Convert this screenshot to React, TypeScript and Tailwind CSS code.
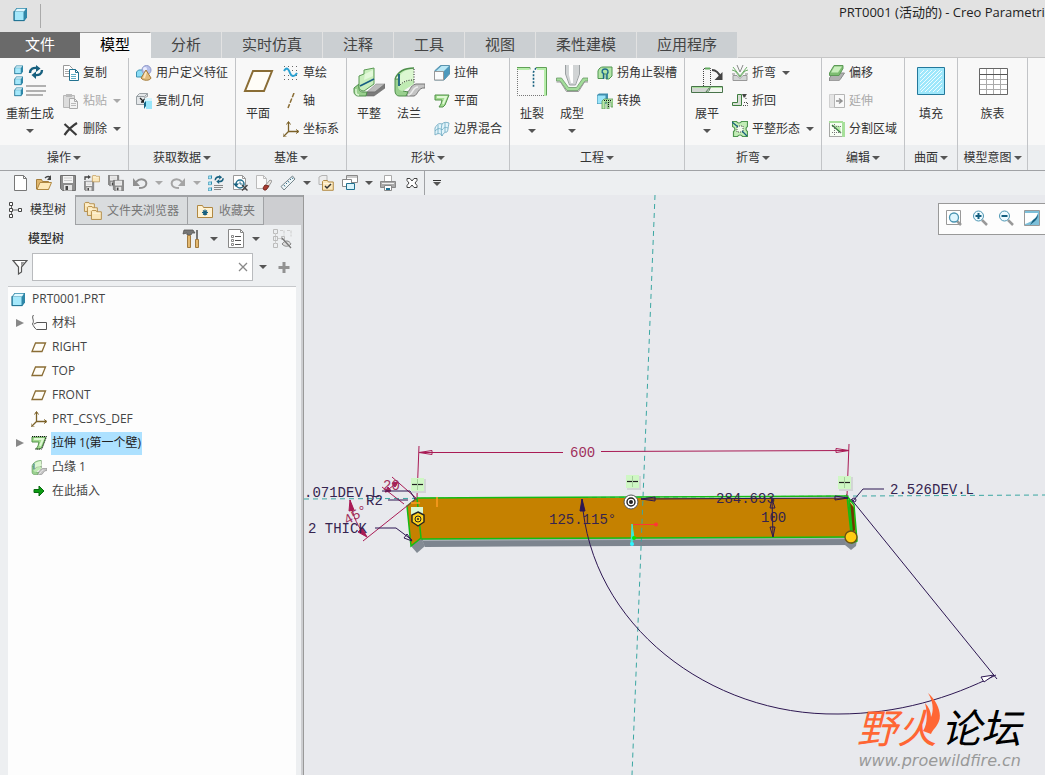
import { useState } from "react";
import type { ReactNode } from "react";

type IconProps = { size?: number; children: ReactNode };

function Svg({ size = 16, children }: IconProps) {
  return (
    <svg width={size} height={size} viewBox={`0 0 ${size} ${size}`} fill="none" aria-hidden="true" className="shrink-0">
      {children}
    </svg>
  );
}

const Caret = ({ dim = false }: { dim?: boolean }) => (
  <svg width="8" height="4" viewBox="0 0 8 4" aria-hidden="true" className="shrink-0">
    <path d="M0 0h8L4 4z" fill={dim ? "#a9a9a9" : "#555"} />
  </svg>
);

const Cube = ({ x = 0, y = 0, s = 8 }: { x?: number; y?: number; s?: number }) => (
  <g transform={`translate(${x} ${y}) scale(${s / 8})`}>
    <path d="M0.5 2.5L2 .5h6v5.5L6.5 8h-6z" fill="#2f87a8" />
    <path d="M1 2.5L2.3 1h5L6.3 2.5z" fill="#e2f9ff" />
    <path d="M1 2.8h5v4.7H1z" fill="#a5e8fb" />
    <path d="M.5 2.5v5.3h6" stroke="#1d6d8d" strokeWidth=".5" fill="none" />
  </g>
);

const Refresh = ({ x = 0, y = 0, k = 1 }: { x?: number; y?: number; k?: number }) => (
  <g transform={`translate(${x} ${y}) scale(${k})`}>
    <path d="M2 8C2 4 5 2.500 9 3" stroke="#17607f" strokeWidth="2.400" fill="none" />
    <path d="M8 0l4.500 3.500L8 7z" fill="#17607f" />
    <path d="M14 5c0 4-3 5.500-7 5" stroke="#17607f" strokeWidth="2.400" fill="none" />
    <path d="M8 6.500L3.500 10 8 14z" fill="#17607f" />
  </g>
);

const Doc = ({ x = 0, y = 0, w = 10, h = 13, line = "#888", fill = "#fff" }) => (
  <g transform={`translate(${x} ${y})`}>
    <path d={`M.5.500h${w - 4}l3 3v${h - 4}H.500z`} fill={fill} stroke={line} />
    <path d={`M${w - 3.5}.5v3h3`} stroke={line} fill="none" />
  </g>
);

const Floppy = ({ x = 0, y = 0, s = 16 }: { x?: number; y?: number; s?: number }) => (
  <g transform={`translate(${x} ${y}) scale(${s / 16})`}>
    <path d="M.5.5h15v15h-13l-2-2z" fill="#8d8d8d" stroke="#707070" />
    <path d="M3 1h10v7H3z" fill="#f4f4f4" />
    <path d="M4 3h8M4 5.500h8" stroke="#ccc" />
    <path d="M4 10h8v5.500H4z" fill="#e4e4e4" />
    <path d="M5.500 11h2.500v4H5.500z" fill="#444" />
  </g>
);

const Folder = ({ x = 0, y = 0, k = 1 }: { x?: number; y?: number; k?: number }) => (
  <g transform={`translate(${x} ${y}) scale(${k})`}>
    <path d="M.5 10.500V1.500L1.500.5h4l1 1.500h5v8.500z" fill="#fbe7ba" stroke="#b08842" />
    <path d="M1.500 3.500h9" stroke="#fff7e2" />
  </g>
);

const Plane = ({ size = 16 }) => (
  <Svg size={size}>
    {size > 16 ? (
      <path d="M11 6h19l-8 20H3z" fill="#fffdf7" stroke="#8a6d35" strokeWidth="2" />
    ) : (
      <path d="M4.500 4h10l-3.500 8.500H1z" fill="#fffdf7" stroke="#8a6d35" strokeWidth="1.300" />
    )}
  </Svg>
);

const Csys = () => (
  <Svg>
    <path d="M5.500 1v9.500H15M5.500 10.500L1 15" stroke="#7b6128" strokeWidth="1.300" />
    <path d="M3.500 3.500l2-3 2 3M13 8.500l3 2-3 2M0 12.500V16h3.500" stroke="#7b6128" />
  </Svg>
);

const FlatWall = () => (
  <Svg size={32}>
    <path d="M14 27l9-8h9l-10 8z" fill="#bcbcbc" stroke="#8a8a8a" strokeWidth=".6" />
    <path d="M14 27h8l10-8v4l-11 8h-8z" fill="#7b7b7b" stroke="#666" strokeWidth=".6" />
    <path d="M1 23l5-4v4c0 3 2 4 4 4h4l-1 4H5c-2 0-4-2-4-4z" fill="#9ad08f" stroke="#4e8e4b" />
    <path d="M6 20v-9l5-2V5l10-2v16l-10 7c-3 0-5-2-5-4z" fill="#c9efbd" stroke="#5a9a54" />
    <path d="M12 9l8-4v6l-9 4z" fill="#e3f9da" />
    <path d="M7 21l14-7" stroke="#185f83" strokeWidth="1.800" />
    <path d="M3 24v3c0 2 1 3 3 3" stroke="#dcf5d3" strokeWidth="1.500" />
  </Svg>
);

const Flange = ({ size = 32 }) => (
  <svg width={size} height={size} viewBox="0 0 32 32" fill="none" aria-hidden="true" className="shrink-0">
    <path d="M14 27c3 0 3-7 9-8h9v4c-7-1-7 7-11 8h-8z" fill="#c4c4c4" stroke="#777" />
    <path d="M15 30c5 0 4-8 10-8" stroke="#ededed" strokeWidth="1.500" />
    <path d="M2 14v12c0 3 2 5 4 5h7l2-4-5-1V14z" fill="#9ad08f" stroke="#4e8e4b" />
    <path d="M2 13c3-7 10-10 19-10v16l-11 7c-3 0-5-2-5-4V12z" fill="#c0ebb3" />
    <path d="M6 13c2-6 8-9 15-9v11c-6 0-11 2-15 6z" fill="#dcf7d1" />
    <path d="M2 14c3-8 10-11 19-11" stroke="#4e8e4b" strokeWidth="1.300" />
    <path d="M7 20c4-4 8-5 14-5M21 4v15" stroke="#222" strokeDasharray="1 1.500" />
    <path d="M6 9v12" stroke="#17607f" strokeWidth="1.800" />
  </svg>
);

const GreenSheet = ({ dotted = false }) => (
  <Svg>
    <path d="M1 2h14l-4 10-2 2H5l2-3 1-4H1z" fill="#a3dc8f" stroke="#53924b" />
    <path d="M3 4h9l-3 7" stroke="#dff8d4" strokeWidth="2" />
    {dotted && <path d="M1 1.500h14.500L11 14H4" stroke="#111" strokeDasharray="1 1" />}
  </Svg>
);

const icons: Record<string, ReactNode> = {
  regenerate: (
    <Svg size={32}>
      <Cube x={0} y={0} s={9} />
      <Cube x={0} y={11} s={9} />
      <Cube x={0} y={22} s={9} />
      <Refresh x={14} y={0} />
      <path d="M12 21h20M12 26h20M12 30h17" stroke="#999" strokeWidth="1.600" />
    </Svg>
  ),
  copy: (
    <Svg>
      <path d="M.5.500h6l3 3v8h-9z" fill="#fff" stroke="#999" />
      <path d="M2 4.500h3M2 6.500h4M2 8.500h4" stroke="#aaa" />
      <Doc x={6} y={4} w={10} h={12} line="#22718f" />
      <path d="M8 9.500h5M8 11.500h5M8 13.500h5" stroke="#5eaec7" />
    </Svg>
  ),
  paste: (
    <Svg>
      <path d="M.5 2.500h11v12H.500z" fill="#ddd" stroke="#b7b7b7" />
      <path d="M3 1h6v3H3z" fill="#bbb" />
      <Doc x={6} y={5} w={9} h={11} line="#aaa" fill="#f3f3f3" />
      <path d="M8 10.500h5M8 12.500h5" stroke="#bbb" />
    </Svg>
  ),
  remove: (
    <Svg>
      <path d="M1.500 3l12 11M14 2C9 5 5 9 1.500 14" stroke="#3b3b3b" strokeWidth="2.200" />
    </Svg>
  ),
  udf: (
    <Svg>
      <path d="M.5 7l2-2h7v7H.500z" fill="#8bdcf5" stroke="#3d93b2" />
      <circle cx="10.500" cy="5" r="4.500" fill="#b6bee8" stroke="#8f98c9" />
      <circle cx="9" cy="4" r="2" fill="#e9ecff" />
      <path d="M10 5l5 8c-1 3-8 3-10 0z" fill="#e2bd7d" stroke="#a37a37" />
      <path d="M10 7l-2 6" stroke="#fae5c0" strokeWidth="2" />
    </Svg>
  ),
  copyGeom: (
    <Svg>
      <path d="M.5 3.500l3-3h8v3l-3 1v7h-8z" fill="#e4e7e9" stroke="#9aa1a5" />
      <path d="M.5 3.500h8l3-3" stroke="#9aa1a5" />
      <path d="M4 5l4 4M8 6v3H5" stroke="#222" strokeWidth="1.400" />
      <path d="M8 9l2-3v7l-2 3z" fill="#116486" />
      <path d="M10 8h6v8h-6z" fill="#99e6fa" />
      <path d="M8 7.500l2-2.500h6v3h-6l-2 2z" fill="#d6f5fd" />
    </Svg>
  ),
  plane: <Plane size={32} />,
  sketch: (
    <Svg>
      <path d="M1 1.500h14M1 14.500h14M1 5.500h14M1 10.500h14" stroke="#666" strokeDasharray="1 3" />
      <path d="M1 6c3-5 5-1 6 2s4 5 7 0" stroke="#2ba0d0" strokeWidth="2" />
    </Svg>
  ),
  axis: (
    <Svg>
      <path d="M11 0L5 15" stroke="#8a6d35" strokeWidth="1.500" strokeDasharray="4.500 1.500" />
    </Svg>
  ),
  csys: <Csys />,
  flatWall: <FlatWall />,
  flange: <Flange />,
  extrude: (
    <Svg>
      <path d="M.5 6l6-5.500h9V9L10 15H.500z" fill="#4d99bd" stroke="#5b93ad" />
      <path d="M2 6l5.500-5H15l-5 5z" fill="#b9e7f5" />
      <path d="M.5 6.500h9V15h-9z" fill="#fbfcfd" stroke="#999" />
    </Svg>
  ),
  planar: <GreenSheet />,
  blend: (
    <Svg>
      <path d="M1 14V7c2-4 4-5 7-4 2-2 4-2 7-1-1 5-1 8-2 9-3 0-4 2-5 4-1-3-4-3-7-1z" fill="#e2f4fb" stroke="#7fb3c8" />
      <path d="M8 3c-1 4-1 8 0 12M1 10c3-3 5-3 7-1 2-3 4-3 6-2M4 4v9M11 2v9" stroke="#6aa9c2" strokeWidth=".8" />
    </Svg>
  ),
  rip: (
    <Svg size={32}>
      <path d="M1 2.500h13v2M20 2.500h10.500v28" stroke="#5fa156" />
      <path d="M1 4h12M21 4h8v27" stroke="#b7edaa" strokeWidth="2" />
      <path d="M1.500 4v26.500H28" stroke="#777" strokeDasharray="1 1" />
      <path d="M20 3l-2.500 4v16" stroke="#17607f" strokeWidth="1.600" strokeDasharray="2 1.500" />
    </Svg>
  ),
  form: (
    <Svg size={32}>
      <path d="M10 0h13v9l-4 11h-5L10 10z" fill="#d1d4d5" />
      <path d="M13 0h4v18h-2l-2-8z" fill="#fff" />
      <path d="M23.500 0v9l-4 11h-6L9.500 9V0" stroke="#9a9fa1" />
      <path d="M.5 13h5l7 9.500h8L27 13h5v3h-3l-7 9.500H11L4 16H.500z" fill="#a3dc9a" stroke="#6a9967" strokeWidth=".8" />
      <path d="M.5 17h4l6 9.500h12l6-9.500H32" stroke="#999" />
    </Svg>
  ),
  cornerRelief: (
    <Svg>
      <path d="M1 13.500V6c1-3 3-4 5-4h9v9l-3 3H9V9H7v4.500z" fill="#b3e5a7" stroke="#4f9650" />
      <path d="M6.500 14V8.500C4 7 5 4 8 4s4 3 2 5v5" stroke="#19688c" strokeWidth="1.400" />
    </Svg>
  ),
  convert: (
    <Svg>
      <path d="M0 2l2-1.500h9V9L9 11H0z" fill="#408ead" />
      <path d="M.5 2.500h8v8h-8z" fill="#9be5fa" />
      <path d="M5 16V8l2-2h9v8h-2V9h-2v7h-2V9H8v7z" fill="#b8eaab" stroke="#5a9a54" strokeWidth=".8" />
      <path d="M7 7.500h8M11.500 9v6" stroke="#111" strokeDasharray="1 1" />
    </Svg>
  ),
  unbend: (
    <Svg size={32}>
      <path d="M.5 21.500h19l-5 6H.500z" fill="#d2d6d2" stroke="#48734a" />
      <path d="M14.500 27.500c3 0 4-2 5-6h12v6z" fill="#f1f6ef" stroke="#48734a" />
      <path d="M1.500 22.500h17M20 22.500h11" stroke="#a6e09a" />
      <path d="M12.500 21V3.500h7v17" stroke="#444" strokeDasharray="1 1" />
      <path d="M14 3.500h5" stroke="#65ac62" strokeWidth="2" />
      <path d="M21 5c4 0 7 3 9 8" stroke="#444" strokeWidth="2" />
      <path d="M31.500 7v8h-8z" fill="#444" />
    </Svg>
  ),
  bend: (
    <Svg>
      <path d="M1 15.500v-5h4l3 3 3-3h4v5z" fill="#d3d6d6" stroke="#999" />
      <path d="M0 5l3 1 5 6 5-6 3-1M1 2l7 9 7-9" stroke="#6fae69" />
      <path d="M5 0l3 7 3-7M0 9h3M13 9h3" stroke="#888" />
    </Svg>
  ),
  bendBack: (
    <Svg>
      <path d="M.5 12.500v-3h5v-8h4v11z" fill="#d9ded7" stroke="#3e7e3f" />
      <path d="M11 12.500h4.500v-3H11M14 6c0-2-1-3-3-4" stroke="#444" strokeDasharray="1 1" />
      <path d="M10 1h5l-3 4z" fill="#444" />
    </Svg>
  ),
  flatPattern: (
    <Svg>
      <path d="M.5.500h4c1 2 4 2 5 0h6v5c-2 1-2 4 0 5v5h-5c-1-2-4-2-5 0h-4v-5c2-1 2-4-1-5z" fill="#c2edb6" stroke="#4f9650" strokeWidth="1.200" />
      <path d="M5 5h6v6H5z" fill="#f1fbed" stroke="#555" strokeDasharray="1 1" />
      <path d="M0 1l6 5M10 10l5 5" stroke="#17607f" strokeWidth="1.300" />
    </Svg>
  ),
  offset: (
    <Svg>
      <path d="M4 8h11.500l-4 6-2 2H.500v-3z" fill="#b1b1b1" stroke="#8b8b8b" />
      <path d="M5 .5h9v3l-4 7H.500V8z" fill="#7ebd72" stroke="#5d9a57" />
      <path d="M5.500 1.500h7.500l-4 6H2z" fill="#c9efbd" />
    </Svg>
  ),
  extend: (
    <Svg>
      <path d="M.5 1.500h5v13h-5z" fill="#e5e5e5" stroke="#d0d0d0" />
      <path d="M5.500 1.500h10v13h-10z" fill="#f9f9f9" stroke="#b5b5b5" />
      <path d="M7 8h6M10 5.500L13 8l-3 2.500" stroke="#929292" strokeWidth="1.500" />
    </Svg>
  ),
  split: (
    <Svg>
      <path d="M.5.500h13v15h-13z" fill="#f8fff5" stroke="#555" strokeDasharray="1 1" />
      <path d="M13 1h3v15h-3z" fill="#a7e09b" />
      <path d="M0 1h14" stroke="#a7e09b" strokeWidth="2" />
      <path d="M4 4l7 1 1 7z" fill="#b8eaab" />
      <path d="M3 4l9 8" stroke="#367b3d" strokeWidth="1.400" />
      <path d="M5.500 3v11M3 5.500h10M3 11.500h10" stroke="#777" strokeDasharray="1 1" />
    </Svg>
  ),
  fill: (
    <Svg size={32}>
      <path d="M2.500 2.500h27v27h-27z" fill="#9ee7fb" stroke="#23789b" />
      <path
        d="M5 9l4-4M5 13l8-8M5 17L17 5M5 21L21 5M5 25L25 5M6 27L27 6M10 27l17-17M14 27l13-13M18 27l9-9M22 27l5-5"
        stroke="#effcff"
      />
    </Svg>
  ),
  familyTable: (
    <Svg size={32}>
      <path d="M2.500 3.500h28v26h-28z" fill="#fff" stroke="#666" />
      <path d="M3 14.500h27M3 19.500h27M3 24.500h27M9.500 4v25M16.500 4v25M23.500 4v25" stroke="#aaa" />
      <path d="M3 9.500h27" stroke="#555" />
    </Svg>
  ),
  newFile: (
    <Svg>
      <Doc x={2} y={0} w={13} h={16} line="#777" />
    </Svg>
  ),
  open: (
    <Svg>
      <path d="M.5 14V4.500h5l1 2h6v8z" fill="#dfb66d" stroke="#a47d3a" />
      <path d="M1 14.500l3-7h11.500l-3 7z" fill="#ffe9b8" stroke="#b08842" />
      <path d="M9 3c2-2 3-2 5-1" stroke="#444" strokeWidth="1.400" />
      <path d="M15 0v5h-4z" fill="#444" />
    </Svg>
  ),
  save: (
    <Svg>
      <Floppy />
    </Svg>
  ),
  saveAs: (
    <Svg>
      <Floppy y={6} s={10} />
      <Folder x={8} y={0} k={0.65} />
      <path d="M1 5V2h4" stroke="#444" strokeWidth="1.300" />
      <path d="M4 0l3 2-3 2z" fill="#444" />
    </Svg>
  ),
  saveCopy: (
    <Svg>
      <Floppy s={11} />
      <Floppy x={5} y={5} s={11} />
    </Svg>
  ),
  undo: (
    <Svg>
      <path d="M4 7c5-5 12-2 10 3-1 3-4 3-7 3" stroke="#909090" strokeWidth="2" />
      <path d="M1 3v8h7z" fill="#909090" />
    </Svg>
  ),
  redo: (
    <Svg>
      <path d="M12 7C7 2 0 5 2 10c1 3 4 3 7 3" stroke="#a5a5a5" strokeWidth="2" />
      <path d="M15 3v8H8z" fill="#a5a5a5" />
    </Svg>
  ),
  regenSmall: (
    <Svg>
      <Cube y={0} s={4} />
      <Cube y={6} s={4} />
      <Cube y={12} s={4} />
      <Refresh x={6} y={0} k={0.65} />
      <path d="M6 10.500h9M6 12.500h9M6 14.500h7" stroke="#888" />
    </Svg>
  ),
  regenManager: (
    <Svg>
      <Doc x={1} w={13} h={15} line="#999" />
      <circle cx="8" cy="9" r="4" fill="#fff" stroke="#24718f" strokeWidth="1.500" />
      <path d="M8 6.500V9h2.500" stroke="#24718f" />
      <path d="M1 8.500l3 3.500 3-3.500z" fill="#17607f" />
      <path d="M10 10l5.500 5.500M15.500 10L10 15.500" stroke="#444" strokeWidth="1.400" />
    </Svg>
  ),
  erase: (
    <Svg>
      <Doc w={11} h={14} line="#bbb" fill="#fafafa" />
      <path d="M8 12l6-7 2 1-5 8z" fill="#eee8e2" stroke="#999" />
      <path d="M7 13l2-3 4 1-3 4H8z" fill="#aa3d32" stroke="#792b23" />
    </Svg>
  ),
  measure: (
    <Svg>
      <path d="M1 11.500L12.500 1 15 4 4 15z" fill="#eff6f8" stroke="#76858b" />
      <path d="M4 10l1 1.500M6 8l1 1M8 6l1 1.500M10 4l1 1M12 2.500l1 1.500" stroke="#37718a" />
    </Svg>
  ),
  folders: (
    <Svg>
      <path d="M1 2l3-1.500h5v9H1z" fill="#ededed" stroke="#b3b3b3" />
      <Folder x={4} y={5} k={0.98} />
      <path d="M7 11l2 2 4-4" stroke="#333" strokeWidth="1.500" />
    </Svg>
  ),
  windows: (
    <Svg>
      <path d="M4.500.5h11v7h-11z" fill="#fff" stroke="#888" />
      <path d="M.5 4.500h9v7h-9z" fill="#fff" stroke="#888" />
      <path d="M4.500 8.500h8v6h-8z" fill="#d9f3fb" stroke="#20708f" />
      <path d="M5 2h10" stroke="#999" />
    </Svg>
  ),
  print: (
    <Svg>
      <path d="M4.500.5h7v6h-7z" fill="#fff" stroke="#aaa" />
      <path d="M.5 6.500h15v6H.500z" fill="#a9a9a9" stroke="#888" />
      <path d="M2 8.500h12" stroke="#eee" />
      <path d="M4.500 10.500h7v5h-7z" fill="#fff" stroke="#888" />
      <path d="M6 13h4v2H6z" fill="#1d7194" />
    </Svg>
  ),
  closeWindow: (
    <Svg>
      <path d="M3 3.500h3l2 2.500 2-2.500h3v2L11 8l2 2.500v2h-3L8 10l-2 2.500H3v-2L5 8 3 5.500z" fill="#fff" stroke="#444" />
    </Svg>
  ),
  part: (
    <Svg>
      <Cube x={1} y={1} s={14} />
    </Svg>
  ),
  material: (
    <Svg>
      <path d="M2.500 0C0 3 4 5 1.500 9c1 2 2 4 4 5.500h10v-7H6L3 9" stroke="#555" />
    </Svg>
  ),
  datum: <Plane />,
  wall: <GreenSheet dotted />,
  insert: (
    <Svg>
      <path d="M3 6.500h5V3l5 5-5 5V9.500H3z" fill="#0c9c13" stroke="#086b10" />
    </Svg>
  ),
  tree: (
    <Svg>
      <path d="M3.500 3v10M3.500 8h7" stroke="#666" />
      <path d="M1.500.5h3v3h-3zM1.500 6.500h3v3h-3zM10.500 6.500h3v3h-3zM1.500 12.500h3v3h-3z" fill="#fff" stroke="#444" />
    </Svg>
  ),
  browser: (
    <Svg size={20}>
      <Folder x={1} y={1} k={0.9} />
      <Folder x={4} y={5} k={0.9} />
      <Folder x={8} y={9} k={0.9} />
    </Svg>
  ),
  favorite: (
    <Svg>
      <path d="M.5 14.500v-12h5l1 2h9v10z" fill="#fff2d2" stroke="#b08842" />
      <path d="M8 6.500v6M5 9.500h6M6 7.500l4 4M10 7.500l-4 4" stroke="#17607f" strokeWidth="1.200" />
    </Svg>
  ),
  tools: (
    <Svg size={20}>
      <path d="M2 1h9l2 3h-3l-1 2H5V4L1 5z" fill="#777" stroke="#555" strokeWidth=".8" />
      <path d="M5.500 6.500h3v12h-3z" fill="#e3b971" stroke="#a07a40" />
      <path d="M15 1v9" stroke="#777" strokeWidth="2" />
      <path d="M13.500 10.500h3v8h-3z" fill="#e3b971" stroke="#a07a40" />
    </Svg>
  ),
  list: (
    <Svg size={20}>
      <Doc x={2} y={0} w={16} h={19} />
      <path d="M9 7.500h6M9 11.500h6M9 15.500h6" stroke="#555" />
      <path d="M5.500 6.500h2v2h-2zM5.500 10.500h2v2h-2zM5.500 14.500h2v2h-2z" stroke="#888" />
    </Svg>
  ),
  treeHidden: (
    <Svg size={20}>
      <path d="M1.500.5h4v4h-4zM1.500 7.500h4v4h-4zM1.500 14.500h4v4h-4zM9.500 7.500h3v3h-3z" stroke="#bbb" />
      <path d="M3.500 4v11M6 9.500h3M8 1.500h4v5M15 1.500h4v6" stroke="#ccc" strokeDasharray="3 1" />
      <path d="M10 15c3-4 7-4 9 0-3 3-6 3-9 0z" fill="#ddd" stroke="#888" />
      <path d="M10 9l9 10" stroke="#777" strokeWidth="1.300" />
    </Svg>
  ),
  funnel: (
    <Svg>
      <path d="M1 1.500h14L9.500 8v5l-3 2V8z" fill="#fff" stroke="#555" strokeWidth="1.200" />
      <path d="M9 3h4L9 7.500z" fill="#999" />
    </Svg>
  ),
  plus: (
    <Svg>
      <path d="M8 3v11M2.500 8.500h11" stroke="#929292" strokeWidth="3" />
    </Svg>
  ),
  zoomFit: (
    <Svg>
      <path d="M.5.500h14v14H.500z" fill="#fff" stroke="#999" />
      <path d="M11 11l4 4" stroke="#999" strokeWidth="2.500" />
      <circle cx="8" cy="7.500" r="4.500" fill="#dff6ff" stroke="#4b95b2" strokeWidth="1.300" />
    </Svg>
  ),
  zoomIn: (
    <Svg>
      <path d="M10 10l5 5" stroke="#999" strokeWidth="2.500" />
      <circle cx="6.500" cy="6" r="5" fill="#eefaff" stroke="#4b95b2" />
      <path d="M6.500 3v6M3.500 6h6" stroke="#145f80" strokeWidth="2" />
    </Svg>
  ),
  zoomOut: (
    <Svg>
      <path d="M10 10l5 5" stroke="#999" strokeWidth="2.500" />
      <circle cx="6.500" cy="6" r="5" fill="#eefaff" stroke="#4b95b2" />
      <path d="M3.500 6h6" stroke="#145f80" strokeWidth="2" />
    </Svg>
  ),
  repaint: (
    <Svg>
      <path d="M.5.500h15v15H.500z" fill="#7dbfd9" stroke="#999" />
      <path d="M1 3h13C12 9 7 12 1 14z" fill="#fff" />
      <path d="M14 4c-1 3-3 5-5 6l-3 5 5-4c2-2 3-4 3-7z" fill="#17607f" />
    </Svg>
  ),
};

type Item = { icon: string; label: string; menu?: boolean; disabled?: boolean };
type Group = { title: string; width: string; big?: Item[]; small?: Item[] };

const groups: Group[] = [
  {
    title: "操作",
    width: "w-[129px]",
    big: [{ icon: "regenerate", label: "重新生成", menu: true }],
    small: [
      { icon: "copy", label: "复制" },
      { icon: "paste", label: "粘贴", menu: true, disabled: true },
      { icon: "remove", label: "删除", menu: true },
    ],
  },
  {
    title: "获取数据",
    width: "w-[107px]",
    small: [
      { icon: "udf", label: "用户定义特征" },
      { icon: "copyGeom", label: "复制几何" },
    ],
  },
  {
    title: "基准",
    width: "w-[111px]",
    big: [{ icon: "plane", label: "平面" }],
    small: [
      { icon: "sketch", label: "草绘" },
      { icon: "axis", label: "轴" },
      { icon: "csys", label: "坐标系" },
    ],
  },
  {
    title: "形状",
    width: "w-[163px]",
    big: [
      { icon: "flatWall", label: "平整" },
      { icon: "flange", label: "法兰" },
    ],
    small: [
      { icon: "extrude", label: "拉伸" },
      { icon: "planar", label: "平面" },
      { icon: "blend", label: "边界混合" },
    ],
  },
  {
    title: "工程",
    width: "w-[175px]",
    big: [
      { icon: "rip", label: "扯裂", menu: true },
      { icon: "form", label: "成型", menu: true },
    ],
    small: [
      { icon: "cornerRelief", label: "拐角止裂槽" },
      { icon: "convert", label: "转换" },
    ],
  },
  {
    title: "折弯",
    width: "w-[137px]",
    big: [{ icon: "unbend", label: "展平", menu: true }],
    small: [
      { icon: "bend", label: "折弯", menu: true },
      { icon: "bendBack", label: "折回" },
      { icon: "flatPattern", label: "平整形态", menu: true },
    ],
  },
  {
    title: "编辑",
    width: "w-[83px]",
    small: [
      { icon: "offset", label: "偏移" },
      { icon: "extend", label: "延伸", disabled: true },
      { icon: "split", label: "分割区域" },
    ],
  },
  { title: "曲面", width: "w-[53px]", big: [{ icon: "fill", label: "填充" }] },
  { title: "模型意图", width: "w-[70px]", big: [{ icon: "familyTable", label: "族表" }] },
];

const tabs = ["模型", "分析", "实时仿真", "注释", "工具", "视图", "柔性建模", "应用程序"];

const quickItems = [
  { icon: "newFile", label: "新建" },
  { icon: "open", label: "打开" },
  { icon: "save", label: "保存" },
  { icon: "saveAs", label: "另存为" },
  { icon: "saveCopy", label: "保存副本" },
  { icon: "undo", label: "撤消", menu: true, disabled: true },
  { icon: "redo", label: "重做", menu: true, disabled: true },
  { icon: "regenSmall", label: "重新生成" },
  { icon: "regenManager", label: "重新生成管理器" },
  { icon: "erase", label: "拭除" },
  { icon: "measure", label: "测量", menu: true },
  { icon: "folders", label: "工作目录" },
  { icon: "windows", label: "窗口", menu: true },
  { icon: "print", label: "打印" },
  { icon: "closeWindow", label: "关闭" },
];

const treeItems = [
  { icon: "material", label: "材料", branch: true },
  { icon: "datum", label: "RIGHT" },
  { icon: "datum", label: "TOP" },
  { icon: "datum", label: "FRONT" },
  { icon: "csys", label: "PRT_CSYS_DEF" },
  { icon: "wall", label: "拉伸 1(第一个壁)", branch: true },
  { icon: "lip", label: "凸缘 1" },
  { icon: "insert", label: "在此插入" },
];

function BigButton({ item }: { item: Item }) {
  return (
    <button className={`flex flex-col items-center pt-1.5 ${item.label.length > 2 ? "w-14" : "w-10"}`}>
      {icons[item.icon]}
      <span className="mt-2 text-xs leading-[18px] whitespace-nowrap">{item.label}</span>
      {item.menu && (
        <span className="mt-1.5">
          <Caret />
        </span>
      )}
    </button>
  );
}

function SmallButton({ item }: { item: Item }) {
  return (
    <button
      disabled={item.disabled}
      className={`flex h-7 items-center gap-1 text-xs whitespace-nowrap ${item.disabled ? "text-[#aaa]" : ""}`}
    >
      {icons[item.icon]}
      <span>{item.label}</span>
      {item.menu && (
        <span className="ml-0.5">
          <Caret dim={item.disabled} />
        </span>
      )}
    </button>
  );
}

function RibbonGroup({ group }: { group: Group }) {
  const centered = !group.small;
  return (
    <section className={`flex shrink-0 flex-col border-r border-[#c2c4c7] ${group.width}`}>
      <div className={`flex h-[87px] bg-[#f8f8f8] pt-px ${centered ? "justify-center" : "pl-0.5"}`}>
        {group.big?.map((item) => <BigButton key={item.label} item={item} />)}
        {group.small && (
          <div className="ml-[5px] flex flex-col items-start">
            {group.small.map((item) => (
              <SmallButton key={item.label} item={item} />
            ))}
          </div>
        )}
      </div>
      <button className="flex h-[25px] items-center justify-center gap-0.5 bg-[#edeff1] text-xs whitespace-nowrap">
        {group.title}
        <Caret />
      </button>
    </section>
  );
}

function Ribbon() {
  const [active, setActive] = useState("模型");
  return (
    <>
      <nav className="flex h-[26px] text-[15px] whitespace-nowrap text-[#444]">
        <button className="w-20 bg-[#6a6a6a] pb-0.5 text-white">文件</button>
        {tabs.map((tab) => (
          <button
            key={tab}
            onClick={() => setActive(tab)}
            className={`border-r px-5 pb-0.5 ${
              tab === active
                ? "border-[#f8f8f8] border-t border-t-[#999] bg-[#f8f8f8] text-black"
                : "border-[#e2e2e2] bg-[#cbcfd2]"
            }`}
          >
            {tab}
          </button>
        ))}
        <div className="flex-1 border-b border-[#c6c6c6]" />
      </nav>
      <div className="flex overflow-hidden border-b border-[#a0a2a5] bg-[#f8f8f8]">
        {groups.map((group) => (
          <RibbonGroup key={group.title} group={group} />
        ))}
        <div className="flex flex-1 flex-col">
          <div className="flex-1" />
          <div className="h-[25px] bg-[#edeff1]" />
        </div>
      </div>
    </>
  );
}

function QuickBar() {
  return (
    <div className="flex h-6 items-center bg-[#edeff1] pl-2">
      {quickItems.map((item) => (
        <div key={item.icon} className="flex items-center">
          <button aria-label={item.label} className="flex w-6 justify-center">
            {icons[item.icon]}
          </button>
          {item.menu && (
            <button aria-label={`${item.label}选项`} className="flex w-3.5 justify-center">
              <Caret dim={item.disabled} />
            </button>
          )}
        </div>
      ))}
      <button aria-label="自定义" className="flex h-6 w-6 flex-col items-center justify-center gap-px border-l border-[#a0a2a5]">
        <span className="h-px w-2 bg-[#333]" />
        <Caret />
      </button>
    </div>
  );
}

function ModelTree() {
  const [filter, setFilter] = useState("");
  const [selected, setSelected] = useState("拉伸 1(第一个壁)");
  return (
    <aside className="flex w-[304px] shrink-0 flex-col border-r border-[#999] bg-[#edeff1]">
      <div className="flex h-[30px] bg-[#cdced1] text-xs whitespace-nowrap text-[#777]">
        <button className="flex w-[75px] items-center gap-1.5 bg-[#edeff1] pl-2 text-[#333]">
          {icons.tree}
          模型树
        </button>
        <button className="flex w-[113px] items-center gap-1 border border-t-2 border-[#a0a2a5] bg-[#d9dcde] pl-[7px]">
          {icons.browser}
          文件夹浏览器
        </button>
        <button className="flex w-[76px] items-center gap-1.5 border border-t-2 border-l-0 border-[#a0a2a5] bg-[#d9dcde] pl-[9px]">
          {icons.favorite}
          收藏夹
        </button>
        <div className="flex-1 border-t-2 border-[#a0a2a5]" />
      </div>
      <div className="flex flex-1 border-r-2 border-[#cdced1]">
        <div className="flex flex-1 flex-col pr-[5px] pl-2">
          <div className="flex h-7 items-center pl-5">
            <h2 className="flex-1 text-xs font-medium text-[#333]">模型树</h2>
            <div className="flex items-center pr-1">
              <button aria-label="设置" className="flex items-center gap-2">
                {icons.tools}
                <Caret />
              </button>
              <button aria-label="显示" className="ml-2 flex items-center gap-1.5">
                {icons.list}
                <Caret />
              </button>
              <button aria-label="隐藏" className="ml-3">
                {icons.treeHidden}
              </button>
            </div>
          </div>
          <div className="flex h-[33px] items-start pr-1 pl-1">
            <label htmlFor="tree-filter" className="mt-1.5 w-5">
              {icons.funnel}
            </label>
            <div className="flex h-7 flex-1 items-center border border-[#b9bbbe] bg-white pr-1">
              <input
                id="tree-filter"
                aria-label="过滤"
                value={filter}
                onChange={(e) => setFilter(e.target.value)}
                className="h-6 w-0 flex-1 px-1 text-xs outline-none"
              />
              <button aria-label="清除" onClick={() => setFilter("")}>
                <svg width="10" height="10" viewBox="0 0 10 10" aria-hidden="true">
                  <path d="M1 1l8 8M9 1L1 9" stroke="#888" strokeWidth="1.300" />
                </svg>
              </button>
            </div>
            <div className="flex h-7 w-[39px] items-center justify-between pl-1.5">
              <button aria-label="过滤选项">
                <Caret />
              </button>
              <button aria-label="添加">{icons.plus}</button>
            </div>
          </div>
          <ul className="flex-1 border-t border-[#c6c8cb] bg-[#fdfdfd] text-xs text-[#444]">
            <li className="flex h-6 items-center gap-1.5 pl-0.5">
              {icons.part}
              PRT0001.PRT
            </li>
            {treeItems.map((item) => (
              <li key={item.label} className="flex h-6 items-center pl-2">
                <span className="w-[15px]">
                  {item.branch && (
                    <svg width="8" height="8" viewBox="0 0 8 8" aria-hidden="true">
                      <path d="M0 0l8 4-8 4z" fill="#888" />
                    </svg>
                  )}
                </span>
                {item.icon === "lip" ? <Flange size={16} /> : icons[item.icon]}
                <button
                  onClick={() => setSelected(item.label)}
                  className={`ml-1 h-[23px] px-px text-left whitespace-nowrap ${selected === item.label ? "bg-[#ade1ff] text-[#222]" : ""}`}
                >
                  {item.label}
                </button>
              </li>
            ))}
          </ul>
        </div>
      </div>
    </aside>
  );
}

const GreenTag = ({ x, y }: { x: number; y: number }) => (
  <g>
    <rect x={x + 1} y={y + 1} width="14" height="14" fill="#d3d5d6" />
    <rect x={x} y={y} width="13" height="13" fill="#cff7c4" />
    <path d={`M${x + 1} ${y + 6.5}h11`} stroke="#222" strokeWidth="1.200" />
    <path d={`M${x + 6.5} ${y + 1}v11`} stroke="#a5cc9c" />
  </g>
);

function Viewport() {
  return (
    <main className="relative flex-1 overflow-hidden bg-[#e8e9ed]">
      {/* model, datum planes and sheet metal dimensions */}
      <svg
        width="741"
        height="580"
        viewBox="304 195 741 580"
        fill="none"
        role="img"
        aria-label="PRT0001"
        className="block max-w-none font-['Liberation_Mono',monospace] text-sm"
      >
        <path d="M304 499l741-4" stroke="#3aa7a2" strokeDasharray="5 4" />

        <path d="M421 538l430-2 2 9-428 2z" fill="#7d858f" />
        <path d="M423 540l428-2" stroke="#aab0b8" strokeWidth="2" />
        <path d="M411 546l10-8 4 8-8 7z" fill="#838b94" />
        <path d="M845 538l12 2-1 6-5 4-6-5z" fill="#838b94" />
        <path d="M407 506l10-8h430l7 9 3 34-6 2-2-6-428 2-10 7z" fill="#c58100" />
        <path d="M849 502l5 6 1 22-3 3z" fill="#6b3900" />
        <path d="M655 195L632 775" stroke="#3aa7a2" strokeDasharray="5 4" />
        <path d="M417 498l430-2M421 539l428-2" stroke="#14bc14" strokeWidth="1.500" />
        <path d="M417 498l-10 8 4 40 10-8zM847 496l7 9 3 36-5 2zM849 498l4 42" stroke="#14bc14" strokeWidth="1.500" />

        {/* red dimensions */}
        <g stroke="#a91b55">
          <path d="M419 446l-2 51M849 444l-2 52M419 452.500h144M601 451.500l248-1" />
          <path d="M419 452.500l13-2v4zM849 450.500l-13-2v4z" />
          <path d="M392 477l24 21M382 487l22 17M385 492l13-10M363 541l54-43" />
          <path d="M350 500c3 17 8 28 17 37" />
          <path d="M385 492l6-1-3-4zM398 482l-6 1 3 4zM350 500l4 10-5 1zM367 537l-9-5 4-4z" fill="#a91b55" />
        </g>

        {/* purple dimensions */}
        <g stroke="#2d1752">
          <path d="M382 491h28l5 8M388 500h20M375 528h21l16 12" />
          <path d="M412 541l-8-3 3-4z" />
          <path d="M641 499l207-1M641 499l14-2v4zM848 498l-13-2v4z" />
          <path d="M772 499l1 38M772 499l3 9h-5zM773 537l-3-10h5z" />
          <path d="M582 499C590 625 710 716 838 714C898 714 950 698 996 675" />
          <path d="M582 499l-2 12h5z" fill="#2d1752" />
          <path d="M851 499l146 180M853 501l10-12h21" />
          <circle cx="854" cy="500" r="2" />
          <path d="M994 675l-13 2 3 5z" fill="#fff" />
        </g>

        <g fill="#35244f">
          <text x="304" y="497">.071DEV.L</text>
          <text x="366" y="505">R2</text>
          <text x="308" y="533">2 THICK</text>
          <text x="549" y="524">125.115°</text>
          <text x="716" y="503">284.693</text>
          <text x="761" y="522">100</text>
          <text x="890" y="494">2.526DEV.L</text>
        </g>
        <g fill="#a0305c">
          <text x="570" y="457">600</text>
          <text x="383" y="490">20</text>
          <text transform="translate(347 525) rotate(-30)">45°</text>
        </g>

        <GreenTag x={411} y={478} />
        <GreenTag x={626} y={475} />
        <GreenTag x={838} y={476} />
        <path d="M411 507h12v8h-12z" fill="#d9f7d2" />
        <path d="M437 497v10M411 503h9" stroke="#ff9d22" strokeWidth="1.500" />
        <path d="M418 512l6 3v7l-6 4-6-4v-7z" fill="#ffd31a" stroke="#222" strokeWidth="1.400" />
        <circle cx="418" cy="519" r="3" stroke="#222" />
        <circle cx="418" cy="519" r="1" fill="#222" />

        <circle cx="631" cy="502" r="7" fill="#fff" stroke="#555" />
        <circle cx="631" cy="502" r="4" stroke="#222" strokeWidth="1.400" />
        <circle cx="631" cy="502" r="2" fill="#222" />
        <path d="M633 524.500h24" stroke="#ff3535" />
        <circle cx="656" cy="524.500" r="2" fill="#ff3535" />
        <path d="M631 544l1-20 2 14z" fill="#3de9d4" stroke="#3de9d4" />
        <circle cx="634" cy="538" r="2" fill="#05e605" />
        <circle cx="632" cy="544" r="2" fill="#2ff5ff" />
        <circle cx="851" cy="537" r="6" fill="#ffcc13" stroke="#6b5414" strokeWidth="1.400" />
      </svg>

      <div className="absolute top-2 right-0 flex h-8 w-[107px] items-center gap-2.5 overflow-hidden border border-r-0 border-[#999] bg-[#fdfdfd] pb-0.5 pl-[7px]">
        <button aria-label="重新调整">{icons.zoomFit}</button>
        <button aria-label="放大">{icons.zoomIn}</button>
        <button aria-label="缩小">{icons.zoomOut}</button>
        <button aria-label="重画">{icons.repaint}</button>
      </div>

      <div className="absolute right-6 bottom-1 flex flex-col items-end italic">
        <div className="flex gap-1 text-[40px] leading-[46px]">
          <span className="text-[#ff6634]">野火</span>
          <span className="text-black">论坛</span>
        </div>
        <svg width="18" height="42" viewBox="0 0 18 42" aria-hidden="true" className="absolute -top-3 right-20">
          <path d="M5 0c9 8 14 20 11 28-2 6-6 8-8 13L0 38c4-6 5-16 2-28 4 4 6 9 6 14C11 17 10 8 5 0z" fill="#ff6634" />
        </svg>
        <a href="#forum" className="font-['DejaVu_Sans',sans-serif] text-base leading-5 text-[#999]">
          www.proewildfire.cn
        </a>
      </div>
    </main>
  );
}

export default function App() {
  return (
    <div className="flex min-h-screen w-full flex-col overflow-hidden bg-[#e2e2e2] font-['Open_Sans','Noto_Sans_CJK_SC',sans-serif] text-[#333]">
      <header className="flex h-8 items-center overflow-hidden pl-3">
        <div className="mb-1">{icons.part}</div>
        <div className="ml-3 h-6 w-px bg-[#aaa]" />
        <div className="w-0 flex-1" />
        <h1 className="w-[206px] shrink-0 overflow-hidden pb-1.5 text-[13px] whitespace-nowrap text-[#222]">
          PRT0001 (活动的) - Creo Parametric
        </h1>
      </header>
      <Ribbon />
      <QuickBar />
      <div className="flex flex-1">
        <ModelTree />
        <Viewport />
      </div>
    </div>
  );
}
